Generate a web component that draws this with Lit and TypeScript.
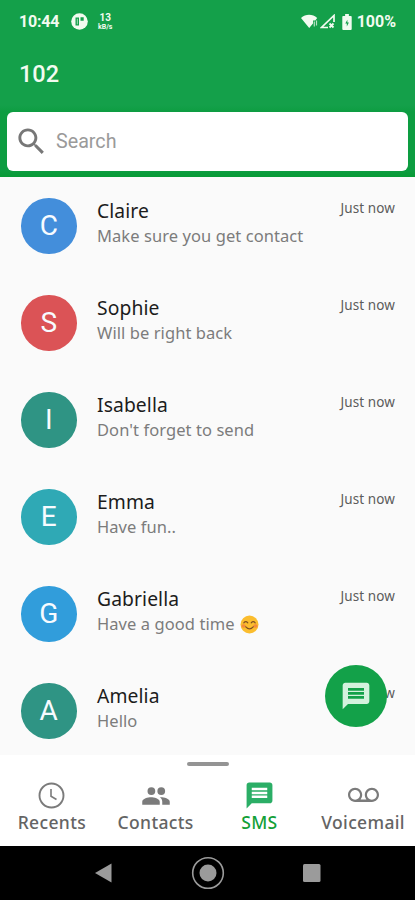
import { LitElement, html, css, svg, nothing } from "lit";
import { customElement, property } from "lit/decorators.js";
import { classMap } from "lit/directives/class-map.js";

interface Message {
  name: string;
  text: string;
  tone: string;
  emoji?: boolean;
}

const MESSAGES: Message[] = [
  { name: "Claire", text: "Make sure you get contact", tone: "blue" },
  { name: "Sophie", text: "Will be right back", tone: "red" },
  { name: "Isabella", text: "Don't forget to send", tone: "green" },
  { name: "Emma", text: "Have fun..", tone: "teal" },
  { name: "Gabriella", text: "Have a good time", tone: "sky", emoji: true },
  { name: "Amelia", text: "Hello", tone: "green" },
];

const chatPath = svg`<path d="M20 2H4c-1.1 0-1.99.9-1.99 2L2 22l4-4h14c1.1 0 2-.9 2-2V4c0-1.1-.9-2-2-2zM6 6h12v2H6zM6 9h12v2H6zM6 12h12v2H6z"/>`;

@customElement("status-bar")
export class StatusBar extends LitElement {
  static styles = css`
    :host {
      display: flex;
      justify-content: space-between;
      align-items: center;
      height: 43px;
      padding: 0 19px 0 19px;
      color: #f2fbf0;
      font: 700 16px/20px Roboto, sans-serif;
    }
    .side { display: flex; align-items: center; }
    .clock { letter-spacing: -0.2px; }
    svg { display: block; fill: #f2fbf0; }
    .app { margin-left: 12px; }
    .rate {
      display: flex;
      flex-direction: column;
      align-items: center;
      margin-left: 9px;
      width: 16px;
      font: 700 10px/11px Roboto, sans-serif;
    }
    .unit { font-size: 7px; line-height: 9px; }
    .signal { margin-left: 2px; }
    .battery { margin: 0 5px 0 7px; }
  `;
  render() {
    return html`
      <div class="side">
        <span class="clock">10:44</span>
        <svg class="app" width="17" height="17" viewBox="0 0 17 17">
          <circle cx="8.500" cy="8.500" r="8.300" />
          <path d="M4.500 4.500H8V12.500H4.500zM9.500 4.200H12.700V7.800H9.500z" fill="#14a04a" />
          <path d="M5.800 5.800H7V11.200H5.800z" fill="#8fd0a6" />
        </svg>
        <div class="rate"><span>13</span><span class="unit">kB/s</span></div>
      </div>
      <div class="side">
        <svg width="17" height="15" viewBox="0 0 17 15">
          <path d="M0 4C4.600-.3 11.600-.3 16.200 4L14.200 6.500H12V9.500L8.200 14z" />
          <path d="M13.300 7.500v5M15.500 6.500v5" stroke="#b5e2c3" stroke-width="1.200" />
        </svg>
        <svg class="signal" width="15" height="15" viewBox="0 0 15 15">
          <path d="M14 8V1.500L1.500 13.500H8" fill="none" stroke="#f2fbf0" stroke-width="1.700" />
          <path d="M9.500 9.500l4 4M13.500 9.500l-4 4" stroke="#f2fbf0" stroke-width="1.800" />
        </svg>
        <svg class="battery" width="10" height="16" viewBox="0 0 10 17">
          <path d="M3 0h4v2h2q1 0 1 1v13q0 1-1 1H1q-1 0-1-1V3q0-1 1-1h2z" />
          <path d="M5.400 6L3.200 10h1.600v3.200l2.200-4.200h-1.600z" fill="#14a04a" />
        </svg>
        <span>100%</span>
      </div>
    `;
  }
}

@customElement("search-field")
export class SearchField extends LitElement {
  static styles = css`
    :host {
      display: flex;
      align-items: center;
      height: 59px;
      margin: 0 7px;
      background: #fff;
      border-radius: 6px;
      box-sizing: border-box;
      padding-left: 7px;
    }
    svg { display: block; fill: #777; }
    .hint { margin-left: 7px; color: #9a9a9a; font: 400 19.700px/24px Roboto, sans-serif; }
  `;
  render() {
    return html`
      <svg width="35" height="35" viewBox="0 0 24 24">
        <path d="M15.500 14h-.79l-.28-.27C15.410 12.590 16 11.110 16 9.500 16 5.910 13.090 3 9.500 3S3 5.910 3 9.500 5.910 16 9.500 16c1.610 0 3.090-.59 4.230-1.570l.27.28v.79l5 4.990L20.490 19l-4.990-5zm-6 0C7.010 14 5 11.990 5 9.500S7.010 5 9.500 5 14 7.010 14 9.500 11.990 14 9.500 14z" />
      </svg>
      <span class="hint">Search</span>
    `;
  }
}

@customElement("message-row")
export class MessageRow extends LitElement {
  @property({ attribute: false }) message!: Message;

  static styles = css`
    :host { display: flex; height: 97px; padding: 0 20px 0 21px; box-sizing: border-box; }
    .avatar {
      width: 55.500px;
      height: 55.500px;
      border-radius: 50%;
      flex: none;
      color: #f7fbff;
      text-align: center;
      font: 400 28px/56px Roboto, sans-serif;
    }
    .blue { background: #438edb; }
    .red { background: #db5356; }
    .green { background: #2f9484; }
    .teal { background: #2fa9b5; }
    .sky { background: #319ddb; }
    .body { flex: 1; margin-left: 20.500px; }
    .name { color: #1c1c1c; font: 400 19.300px/26px "Noto Sans", sans-serif; letter-spacing: 0.1px; }
    .text {
      display: flex;
      align-items: center;
      color: #7c7c7c;
      font: 400 16.500px/24px "Noto Sans", sans-serif;
      letter-spacing: 0.070px;
    }
    .face { margin-left: 5px; }
    .time { color: #5c5c5c; font: 400 13.500px/20px "Noto Sans", sans-serif; letter-spacing: 0.1px; }
  `;
  render() {
    const { name, text, tone, emoji } = this.message;
    return html`
      <div class=${classMap({ avatar: true, [tone]: true })}>${name[0]}</div>
      <div class="body">
        <div class="name">${name}</div>
        <div class="text">
          <span>${text}</span>
          ${emoji
            ? html`<svg class="face" width="19" height="19" viewBox="0 0 19 19">
                <circle cx="9.500" cy="9.500" r="9" fill="#fbbd2e" />
                <ellipse cx="3.600" cy="11" rx="2.200" ry="1.700" fill="#f58b3c" />
                <ellipse cx="15.400" cy="11" rx="2.200" ry="1.700" fill="#f58b3c" />
                <path d="M3.800 7.800q2-2.400 4 0M11.200 7.800q2-2.400 4 0M5.800 11.800q3.700 4 7.400 0" fill="none" stroke="#805125" stroke-width="1.200" stroke-linecap="round" />
              </svg>`
            : nothing}
        </div>
      </div>
      <div class="time">Just now</div>
    `;
  }
}

@customElement("tab-bar")
export class TabBar extends LitElement {
  static styles = css`
    :host { display: block; height: 91px; background: #fff; }
    .handle { width: 42px; height: 4px; border-radius: 2px; background: #949494; margin: 0 auto; }
    .top { padding-top: 7px; }
    .tabs { display: grid; grid-template-columns: repeat(4, 103.750px); margin-top: 13px; }
    .tab {
      display: flex;
      flex-direction: column;
      align-items: center;
      color: #646464;
      font: 500 17.500px/21px "Noto Sans", sans-serif;
      letter-spacing: 0.35px;
    }
    .icon { display: flex; align-items: center; justify-content: center; height: 33px; }
    svg { display: block; fill: #7b7b7b; }
    .active { color: #12a037; }
    .active svg { fill: #2bae66; }
  `;
  render() {
    return html`
      <div class="top"><div class="handle"></div></div>
      <div class="tabs">
        <div class="tab">
          <div class="icon">
            <svg width="27" height="27" viewBox="0 0 27 27">
              <circle cx="13.500" cy="13.500" r="12" fill="none" stroke="#7b7b7b" stroke-width="1.900" />
              <path d="M13 7v7.300l5.500 3.200" fill="none" stroke="#7b7b7b" stroke-width="1.600" />
            </svg>
          </div>
          Recents
        </div>
        <div class="tab">
          <div class="icon">
            <svg width="30" height="30" viewBox="0 0 24 24">
              <circle cx="8.300" cy="8" r="3.100" />
              <circle cx="16.200" cy="8" r="3.100" />
              <path d="M8 13c-2.330 0-7 1.170-7 3.500V19h14v-2.500c0-2.330-4.670-3.500-7-3.500zm8 0c-.29 0-.62.02-.97.05 1.160.84 1.970 1.970 1.970 3.450V19h6v-2.500c0-2.330-4.670-3.500-7-3.500z" />
            </svg>
          </div>
          Contacts
        </div>
        <div class="tab active">
          <div class="icon"><svg width="31" height="31" viewBox="0 0 24 24">${chatPath}</svg></div>
          SMS
        </div>
        <div class="tab">
          <div class="icon">
            <svg width="31" height="31" viewBox="0 0 24 24">
              <path d="M18.500 6C15.460 6 13 8.460 13 11.500c0 1.330.47 2.550 1.260 3.500H9.740c.79-.95 1.260-2.170 1.260-3.500C11 8.460 8.540 6 5.500 6S0 8.460 0 11.500 2.460 17 5.500 17h13c3.040 0 5.500-2.460 5.500-5.500S21.540 6 18.500 6zm-13 9.300C3.400 15.300 1.700 13.600 1.700 11.500s1.700-3.800 3.800-3.800 3.800 1.700 3.800 3.800-1.700 3.800-3.800 3.800zm13 0c-2.100 0-3.800-1.700-3.800-3.800s1.700-3.800 3.800-3.800 3.800 1.700 3.800 3.800-1.700 3.800-3.800 3.800z" />
            </svg>
          </div>
          Voicemail
        </div>
      </div>
    `;
  }
}

@customElement("app-root")
export class AppRoot extends LitElement {
  static styles = css`
    :host {
      display: flex;
      flex-direction: column;
      position: relative;
      width: 415px;
      height: 900px;
      overflow: hidden;
      background: #fafafa;
    }
    .header { flex: none; height: 177px; background: linear-gradient(#14a04a 0 105px, #0d9d41 112px 170px, #079a35 177px); }
    .title { height: 69px; padding-left: 19px; color: #f2fbf0; font: 500 23.500px/63px Roboto, sans-serif; }
    .list { flex: 1; min-height: 0; overflow: hidden; padding-top: 21px; }
    .fab {
      position: absolute;
      left: 325px;
      top: 665px;
      width: 62px;
      height: 62px;
      border-radius: 50%;
      background: #13a149;
      display: flex;
      align-items: center;
      justify-content: center;
    }
    .fab svg { display: block; fill: #d3f2dd; }
    tab-bar { flex: none; }
    .system {
      flex: none;
      height: 54px;
      background: #000;
      display: flex;
      justify-content: center;
      align-items: center;
    }
    .system svg { display: block; width: 104px; height: 54px; fill: #9b9b9b; }
  `;
  render() {
    return html`
      <div class="header">
        <status-bar></status-bar>
        <div class="title">102</div>
        <search-field></search-field>
      </div>
      <div class="list">
        ${MESSAGES.map((m) => html`<message-row .message=${m}></message-row>`)}
      </div>
      <div class="fab"><svg width="32" height="32" viewBox="0 0 24 24">${chatPath}</svg></div>
      <tab-bar></tab-bar>
      <div class="system">
        <svg viewBox="0 0 104 54"><path d="M59.500 17.500v19L43 27z" /></svg>
        <svg viewBox="0 0 104 54">
          <circle cx="52" cy="27" r="8.500" />
          <circle cx="52" cy="27" r="15.300" fill="none" stroke="#9b9b9b" stroke-width="1.600" />
        </svg>
        <svg viewBox="0 0 104 54"><rect x="43" y="18" width="17.500" height="18" rx="1.500" /></svg>
      </div>
    `;
  }
}
